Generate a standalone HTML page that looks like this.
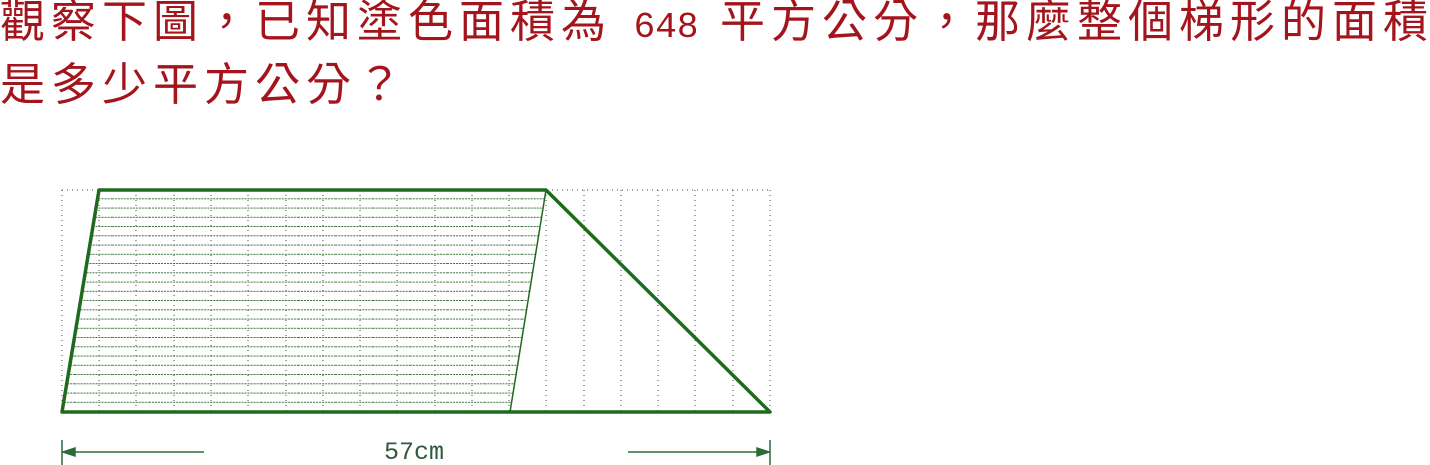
<!DOCTYPE html>
<html><head><meta charset="utf-8"><style>
body{margin:0;width:1430px;height:465px;background:#fff;overflow:hidden;position:relative}
.t{position:absolute;left:0;top:-7px;font-family:"Liberation Sans","Noto Sans CJK TC",sans-serif;font-size:45px;letter-spacing:6px;color:#a3141c;line-height:57px;white-space:nowrap}
.m{font-family:"Liberation Mono",monospace;font-size:36px;letter-spacing:0}
svg{position:absolute;left:0;top:0}
</style></head><body>
<div class="t">觀察下圖，已知塗色面積為<span class="m"> 648 </span>平方公分，那麼整個梯形的面積<br>是多少平方公分？</div>
<svg width="1430" height="465" xmlns="http://www.w3.org/2000/svg">
<defs>
<pattern id="h" x="0" y="190" width="37.26" height="9.25" patternUnits="userSpaceOnUse">
<line x1="0" y1="9" x2="37.26" y2="9" stroke="#1e5a1e" stroke-width="1.2" stroke-dasharray="2,1"/>
</pattern>
</defs>
<g stroke="#444" stroke-width="1" stroke-dasharray="1,4">
<line x1="62" y1="190" x2="770" y2="190"/>
<line x1="62" y1="190" x2="62" y2="412"/><line x1="99" y1="190" x2="99" y2="412"/><line x1="136" y1="190" x2="136" y2="412"/><line x1="174" y1="190" x2="174" y2="412"/><line x1="211" y1="190" x2="211" y2="412"/><line x1="248" y1="190" x2="248" y2="412"/><line x1="286" y1="190" x2="286" y2="412"/><line x1="323" y1="190" x2="323" y2="412"/><line x1="360" y1="190" x2="360" y2="412"/><line x1="397" y1="190" x2="397" y2="412"/><line x1="435" y1="190" x2="435" y2="412"/><line x1="472" y1="190" x2="472" y2="412"/><line x1="509" y1="190" x2="509" y2="412"/><line x1="546" y1="190" x2="546" y2="412"/><line x1="584" y1="190" x2="584" y2="412"/><line x1="621" y1="190" x2="621" y2="412"/><line x1="658" y1="190" x2="658" y2="412"/><line x1="695" y1="190" x2="695" y2="412"/><line x1="733" y1="190" x2="733" y2="412"/><line x1="770" y1="190" x2="770" y2="412"/>
</g>
<polygon points="62,412 99,190 546,190 510,412" fill="url(#h)"/>
<line x1="546" y1="190" x2="510" y2="412" stroke="#1e6b1e" stroke-width="1.5"/>
<polygon points="62,412 99,190 546,190 770,412" fill="none" stroke="#1e6b1e" stroke-width="3.5" stroke-linejoin="round"/>
<g stroke="#2e6b3a" stroke-width="1.5" fill="#2e6b3a">
<line x1="62" y1="440" x2="62" y2="465"/><line x1="770" y1="440" x2="770" y2="465"/>
<line x1="64" y1="452" x2="204" y2="452"/><polygon points="63,452 75,448 75,456"/>
<line x1="628" y1="452" x2="768" y2="452"/><polygon points="769,452 757,448 757,456"/>
</g>
<text x="414" y="459" text-anchor="middle" font-family="Liberation Mono,monospace" font-size="25" fill="#2e5a3a">57cm</text>
</svg>
</body></html>
